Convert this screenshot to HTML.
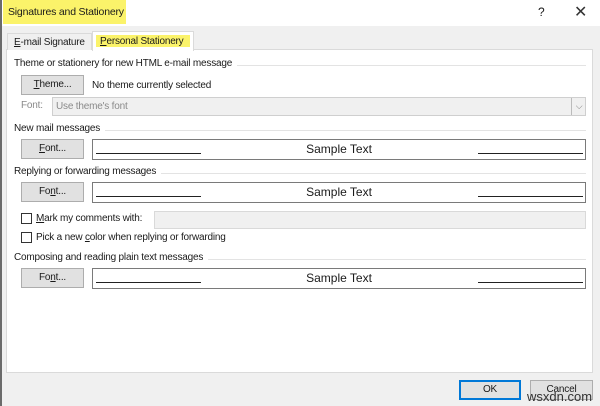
<!DOCTYPE html>
<html><head><style>
*{box-sizing:border-box;margin:0;padding:0}
body{width:600px;height:406px;background:#f0f0f0;font-family:"Liberation Sans",sans-serif;font-size:10px;letter-spacing:-0.2px;color:#1a1a1a;position:relative;overflow:hidden}
.a{position:absolute;white-space:nowrap}
.btn{position:absolute;background:#e1e1e1;border:1px solid #adadad;text-align:center;line-height:18px;font-size:10px}
.sample{position:absolute;left:92px;width:494px;height:21px;border:1px solid #7a7a7a;background:#fff;text-align:center;line-height:19px;font-size:12px;letter-spacing:0}
.sample:before{content:"";position:absolute;left:3px;width:105px;top:13px;border-top:1px solid #222}
.sample:after{content:"";position:absolute;right:2px;width:105px;top:13px;border-top:1px solid #222}
.grp{position:absolute;left:14px;right:14px;height:12px;white-space:nowrap}
.grp span{background:#fff;padding-right:5px;position:relative;z-index:1}
.grp:after{content:"";position:absolute;left:0;right:0;top:7px;border-top:1px solid #e3e3e3}
.cb{position:absolute;width:11px;height:11px;border:1px solid #333;background:#fff}
u{text-decoration:underline}
</style></head><body>
<div class="a" style="left:0;top:0;width:600px;height:26px;background:#fff"></div>
<div class="a" style="left:0;top:0;width:2px;height:406px;background:#6b6b6b"></div>
<div class="a" style="left:3px;top:0;width:123px;height:24px;background:#fbf36a"></div>
<div class="a" style="left:8px;top:6px;font-size:10.5px;letter-spacing:-0.2px">Signatures and Stationery</div>
<div class="a" style="left:538px;top:5px;font-size:12px">?</div>
<div class="a" style="left:574px;top:2px;font-size:16px;color:#333">✕</div>
<div class="a" style="left:6px;top:49px;width:587px;height:324px;background:#fff;border:1px solid #dadada"></div>
<div class="a" style="left:7px;top:33px;width:85px;height:17px;background:#f0f0f0;border:1px solid #dadada;border-bottom:none"></div>
<div class="a" style="left:14px;top:37px"><u>E</u>-mail Signature</div>
<div class="a" style="left:92px;top:31px;width:102px;height:20px;background:#fff;border:1px solid #dadada;border-bottom:none"></div>
<div class="a" style="left:96px;top:35px;width:94px;height:12px;background:#fbf36a"></div>
<div class="a" style="left:100px;top:36px"><u>P</u>ersonal Stationery</div>

<div class="grp" style="top:58px"><span>Theme or stationery for new HTML e-mail message</span></div>
<div class="btn" style="left:21px;top:75px;width:63px;height:20px"><u>T</u>heme...</div>
<div class="a" style="left:92px;top:80px">No theme currently selected</div>
<div class="a" style="left:21px;top:100px;color:#8a8a8a">Font:</div>
<div class="a" style="left:52px;top:97px;width:534px;height:19px;background:#f0f0f0;border:1px solid #cfcfcf;color:#8a8a8a;padding:3px 3px">Use theme's font</div>
<div class="a" style="left:571px;top:98px;width:15px;height:17px;border-left:1px solid #bbb;color:#777;font-size:9px;text-align:center;line-height:16px">⌵</div>

<div class="grp" style="top:123px"><span>New mail messages</span></div>
<div class="btn" style="left:21px;top:139px;width:63px;height:20px"><u>F</u>ont...</div>
<div class="sample" style="top:139px">Sample Text</div>

<div class="grp" style="top:166px"><span>Replying or forwarding messages</span></div>
<div class="btn" style="left:21px;top:182px;width:63px;height:20px">Fo<u>n</u>t...</div>
<div class="sample" style="top:182px">Sample Text</div>

<div class="cb" style="left:21px;top:213px"></div>
<div class="a" style="left:36px;top:213px"><u>M</u>ark my comments with:</div>
<div class="a" style="left:154px;top:211px;width:432px;height:18px;background:#f0f0f0;border:1px solid #d9d9d9"></div>
<div class="cb" style="left:21px;top:232px"></div>
<div class="a" style="left:36px;top:232px">Pick a new <u>c</u>olor when replying or forwarding</div>

<div class="grp" style="top:252px"><span>Composing and reading plain text messages</span></div>
<div class="btn" style="left:21px;top:268px;width:63px;height:20px">Fo<u>n</u>t...</div>
<div class="sample" style="top:268px">Sample Text</div>

<div class="btn" style="left:459px;top:380px;width:62px;height:20px;border:1px solid #0078d7;box-shadow:inset 0 0 0 1px #0078d7">OK</div>
<div class="btn" style="left:530px;top:380px;width:63px;height:20px">Cancel</div>
<div class="a" style="left:527px;top:389px;font-size:13px;color:#333;letter-spacing:0">wsxdn.com</div>
</body></html>
